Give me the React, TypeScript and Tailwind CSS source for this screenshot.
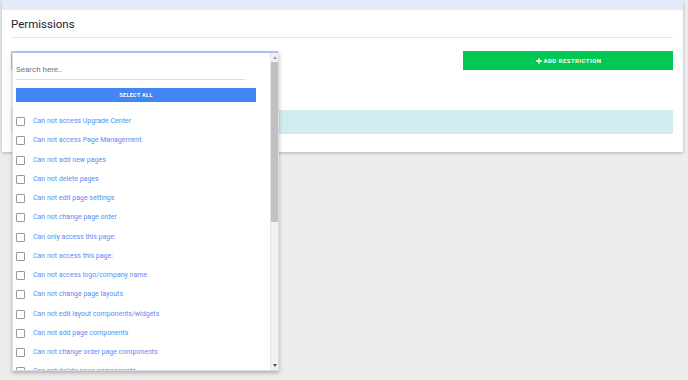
import { Plus } from 'lucide-react'

const options = [
  'Can not access Upgrade Center',
  'Can not access Page Management',
  'Can not add new pages',
  'Can not delete pages',
  'Can not edit page settings',
  'Can not change page order',
  'Can only access this page:',
  'Can not access this page:',
  'Can not access logo/company name',
  'Can not change page layouts',
  'Can not edit layout components/widgets',
  'Can not add page components',
  'Can not change order page components',
  'Can not delete page components',
]

function RestrictionDropdown() {
  return (
    <div className="absolute left-0 top-0 w-[267px] h-[319px] bg-white border border-[#dcdcdc] border-t-[#a9c5f6] shadow-[0_2px_4px_rgba(0,0,0,0.25)] overflow-hidden z-10">
      <div className="pl-[3px] pr-[22px]">
        <div className="pt-[10px] pb-[3px] border-b border-[#dedede] mr-[11px] text-[8px] text-[#757575] leading-[13px]">
          Search here..
        </div>
        <button className="mt-[8px] w-full h-[14px] bg-[#4285f4] text-white text-[5.5px] font-bold tracking-[0.3px] flex items-center justify-center">
          SELECT ALL
        </button>
      </div>
      <ul className="mt-[10px] pl-[3px]">
        {options.map((o) => (
          <li key={o} className="h-[19.25px] flex items-center">
            <span className="w-[9px] h-[9px] border border-[#9a9a9a] rounded-[1px] bg-white shrink-0" />
            <span className="ml-[8px] text-[7px] text-[#5b8cf3] leading-none whitespace-nowrap">{o}</span>
          </li>
        ))}
      </ul>

      {/* scrollbar */}
      <div className="absolute right-0 top-0 bottom-0 w-[8px] bg-[#f1f1f1] border-l border-[#e6e6e6]">
        <div className="absolute left-1/2 -translate-x-1/2 top-[3px] w-0 h-0 border-l-[2px] border-r-[2px] border-b-[3px] border-l-transparent border-r-transparent border-b-[#a3a3a3]" />
        <div className="absolute left-0 right-0 top-[9px] h-[160px] bg-[#c1c1c1]" />
        <div className="absolute left-1/2 -translate-x-1/2 bottom-[3px] w-0 h-0 border-l-[2px] border-r-[2px] border-t-[3px] border-l-transparent border-r-transparent border-t-[#505050]" />
      </div>
    </div>
  )
}

export default function App() {
  return (
    <div className="w-[688px] h-[380px] bg-[#ececec] px-[2px] font-['Roboto',sans-serif] overflow-hidden">
      <div className="w-[681px] bg-white shadow-[0_1px_3px_rgba(0,0,0,0.25)]">
        <div className="h-[10px] bg-[#e3ebfb]" />
        <div className="pl-[9px] pr-[9px] pb-[18px]">
          <h2 className="pt-[7px] pb-[6px] text-[11.5px] leading-[14px] text-[#222]">Permissions</h2>
          <div className="h-px bg-[#e6e6e6] mr-[1px]" />
          <div className="mt-[13px] flex justify-between">
            <div className="relative w-[267px] h-[19px] border border-[#a9c5f6]">
              <RestrictionDropdown />
            </div>
            <button className="w-[210px] h-[19px] mr-[1px] bg-[#00c853] text-white text-[6px] font-bold tracking-[0.45px] flex items-center justify-center gap-[1px]">
              <Plus size={8} strokeWidth={4} />
              ADD RESTRICTION
            </button>
          </div>
          <div className="mt-[40px] h-[24px] mr-[1px] bg-[#d1ecf1] rounded-[1px]" />
        </div>
      </div>
    </div>
  )
}
